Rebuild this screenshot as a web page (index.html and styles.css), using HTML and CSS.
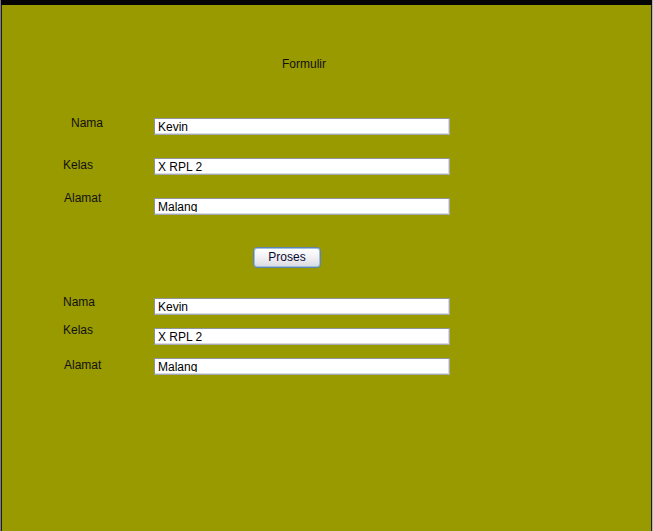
FILE: index.html
```html
<!DOCTYPE html>
<html>
<head>
<meta charset="utf-8">
<link rel="stylesheet" href="styles.css">
</head>
<body>
<div class="window">
  <div class="titlebar"></div>
  <div class="panel">
    <div class="title">Formulir</div>

    <div class="row r1">
      <div class="label l-nama1">Nama</div>
      <div class="field"><div class="val">Kevin</div></div>
    </div>
    <div class="row r2">
      <div class="label l-kelas1">Kelas</div>
      <div class="field"><div class="val">X RPL 2</div></div>
    </div>
    <div class="row r3">
      <div class="label l-alamat1">Alamat</div>
      <div class="field"><div class="val clip">Malang</div></div>
    </div>

    <div class="btnrow"><button class="btn">Proses</button></div>

    <div class="row r4">
      <div class="label l-nama2">Nama</div>
      <div class="field"><div class="val">Kevin</div></div>
    </div>
    <div class="row r5">
      <div class="label l-kelas2">Kelas</div>
      <div class="field"><div class="val">X RPL 2</div></div>
    </div>
    <div class="row r6">
      <div class="label l-alamat2">Alamat</div>
      <div class="field"><div class="val clip">Malang</div></div>
    </div>
  </div>
</div>
</body>
</html>
```

FILE: styles.css
```css
html, body {
  margin: 0;
  padding: 0;
  height: 531px;
  overflow: hidden;
  background: #999900;
}
body {
  font-family: "Liberation Sans", Arial, sans-serif;
  font-size: 12px;
  line-height: 15px;
  color: #000;
}
.window {
  width: 653px;
  height: 531px;
  box-sizing: border-box;
  border-left: 1px solid #7a7a7a;
  border-right: 1px solid #b4b4b4;
  display: flex;
  flex-direction: column;
}
.titlebar {
  height: 5px;
  background: #050505;
  flex: none;
}
.panel {
  flex: 1;
  background: #999900;
  border-left: 1px solid #1e1e1e;
  border-right: 1px solid #1e1e1e;
}
.title {
  margin-top: 52px;
  padding-left: 280px;
  height: 15px;
  color: #111;
}
.row {
  display: grid;
  grid-template-columns: 152px 296px;
  height: 17px;
  align-items: start;
}
.r1 { margin-top: 46px; }
.r2 { margin-top: 23px; }
.r3 { margin-top: 23px; }
.r4 { margin-top: 30px; }
.r5 { margin-top: 13px; }
.r6 { margin-top: 13px; }

.label { white-space: nowrap; color: #111; }
.l-nama1 { padding-left: 69px; margin-top: -2px; }
.l-kelas1 { padding-left: 61px; margin-top: 0; }
.l-alamat1 { padding-left: 62px; margin-top: -7px; }
.l-nama2 { padding-left: 61px; margin-top: -3px; }
.l-kelas2 { padding-left: 61px; margin-top: -5px; }
.l-alamat2 { padding-left: 62px; margin-top: 0; }

.field {
  box-sizing: border-box;
  height: 17px;
  background: #fff;
  border: 1px solid #a5a9b0;
  border-top-color: #8e949c;
  border-left-color: #8e949c;
  box-shadow: inset -1px -1px 0 #d8dbe0;
  padding: 0 3px;
}
.val {
  line-height: 17px;
  height: 15px;
  color: #000;
  white-space: nowrap;
}
.val.clip {
  height: 13px;
  overflow: hidden;
}

.btnrow {
  margin-top: 32px;
  padding-left: 251px;
  height: 21px;
}
.btn {
  box-sizing: border-box;
  width: 68px;
  height: 21px;
  margin: 0;
  padding: 0;
  border: 1px solid #5f84ad;
  box-shadow: inset 0 0 0 1px #9fbde0;
  border-radius: 4px;
  background: linear-gradient(#ffffff 0%, #f3f3f6 45%, #d9dae2 100%);
  font-family: "Liberation Sans", Arial, sans-serif;
  font-size: 12px;
  line-height: 19px;
  color: #0a0a30;
  display: block;
}
```
